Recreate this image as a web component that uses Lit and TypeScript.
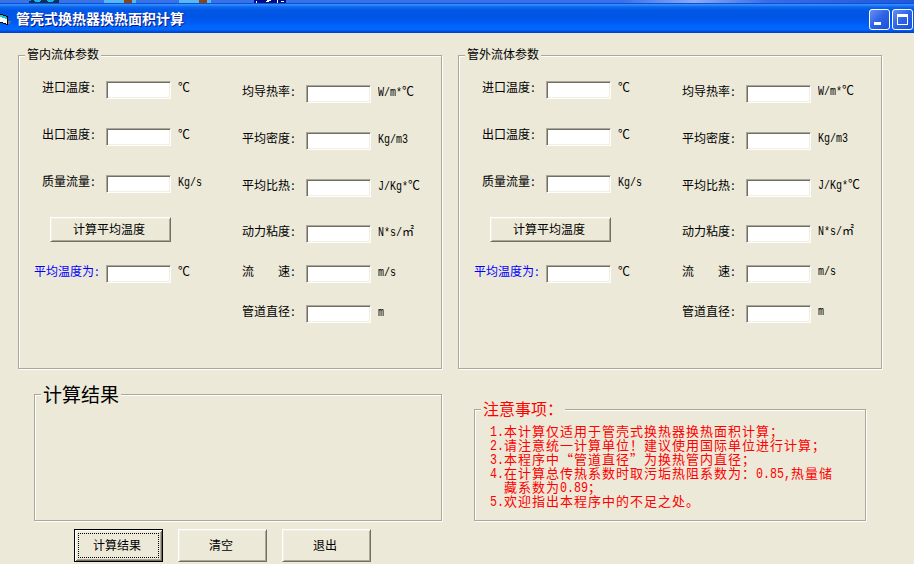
import { LitElement, html, css, svg } from 'lit';
import { customElement, property } from 'lit/decorators.js';

// Latin runs are set half as wide as a Chinese character
const mixed = (text: string) =>
    text.split(/([\x21-\x7e]+)/).filter(Boolean).map(part =>
        /^[\x21-\x7e]/.test(part) ? html`<span class="latin">${part}</span>` : part
    );

const baseText = css`
    .latin {
        display: inline-block;
        font-family: "Liberation Mono", monospace;
        font-size: 10px;
        line-height: 12px;
        letter-spacing: 0;
        transform: scaleY(1.2);
        transform-origin: 0 9px;
    }
`;

@customElement('xp-group')
export class XpGroup extends LitElement {
    @property() caption = '';

    static styles = css`
        :host {
            display: block;
            position: relative;
            box-sizing: border-box;
            border: 1px solid #aca899;
            box-shadow: 1px 1px 0 #fff, inset 1px 1px 0 #fff;
        }

        .caption {
            position: absolute;
            top: var(--caption-top, -8px);
            left: 6px;
            width: var(--caption-width, 74px);
            padding-left: var(--caption-pad, 2px);
            background: #ece9d8;
            color: var(--caption-color, #000);
            font-size: var(--caption-size, 12px);
            line-height: 1;
            white-space: nowrap;
        }
    `;

    render() {
        return html`
            <div class="caption">${this.caption}</div>
            <slot></slot>
        `;
    }
}

@customElement('xp-button')
export class XpButton extends LitElement {
    @property({ type: Boolean, reflect: true }) focused = false;

    static styles = css`
        :host {
            display: block;
        }

        .button {
            display: flex;
            align-items: center;
            justify-content: center;
            position: relative;
            box-sizing: border-box;
            width: 100%;
            height: 100%;
            padding: 0 3px 2px 0;
            border: 1px solid;
            border-color: #fff #716f64 #716f64 #fff;
            border-radius: 0;
            background: #ece9d8;
            box-shadow: inset 1px 1px 0 #f1efe2, inset -1px -1px 0 #aca899;
            color: #000;
            font: inherit;
            line-height: 12px;
        }

        :host([focused]) .button {
            border-color: #000;
            box-shadow: inset 1px 1px 0 #fff, inset -1px -1px 0 #716f64,
                inset 2px 2px 0 #f1efe2, inset -2px -2px 0 #aca899;
        }

        :host([focused]) .button::after {
            content: '';
            position: absolute;
            inset: 3px;
            border: 1px dotted #000;
        }
    `;

    render() {
        return html`<button class="button"><slot></slot></button>`;
    }
}

@customElement('param-field')
export class ParamField extends LitElement {
    @property() label = '';
    @property() unit = '';
    @property({ type: Boolean, reflect: true }) result = false;

    static styles = [
        baseText,
        css`
            :host {
                display: grid;
                grid-template-columns: 64px 65px auto;
                align-items: start;
                justify-content: start;
                height: 18px;
                line-height: 12px;
                white-space: pre;
            }

            :host([result]) {
                grid-template-columns: 72px 65px auto;
                margin-left: -8px;
                color: #00f;
            }

            .colon {
                display: inline-block;
                width: 6px;
                text-align: center;
            }

            .input {
                box-sizing: border-box;
                width: 65px;
                height: 18px;
                padding: 0;
                border: 1px solid;
                border-color: #aca899 #fff #fff #aca899;
                border-radius: 0;
                outline: none;
                background: #fff;
                box-shadow: inset 1px 1px 0 #716f64, inset -1px -1px 0 #f1efe2;
            }

            .unit {
                height: 12px;
                margin: var(--unit-top, 0px) 0 0 7px;
                color: #000;
            }
        `
    ];

    render() {
        return html`
            <div class="label">${this.label}<span class="colon">:</span></div>
            <input class="input" />
            <div class="unit">${mixed(this.unit)}</div>
        `;
    }
}

@customElement('fluid-params')
export class FluidParams extends LitElement {
    static styles = css`
        :host {
            display: flex;
        }

        .thermal {
            display: grid;
            grid-template-rows: 47px 47px 42px 48px 18px;
            align-items: start;
            width: 200px;
            padding: 25px 0 0 23px;
            box-sizing: border-box;
        }

        .material {
            display: grid;
            grid-template-rows: 47px 47px 46px 40px 40px 18px;
            align-items: start;
            padding: 29px 0 0 23px;
            --unit-top: var(--material-unit-top, 0px);
        }

        .average {
            width: 121px;
            height: 25px;
            margin-left: 8px;
        }
    `;

    render() {
        return html`
            <div class="thermal">
                <param-field label="进口温度" unit="℃"></param-field>
                <param-field label="出口温度" unit="℃"></param-field>
                <param-field label="质量流量" unit="Kg/s"></param-field>
                <xp-button class="average">计算平均温度</xp-button>
                <param-field label="平均温度为" unit="℃" result></param-field>
            </div>
            <div class="material">
                <param-field label="均导热率" unit="W/m*℃"></param-field>
                <param-field label="平均密度" unit="Kg/m3"></param-field>
                <param-field label="平均比热" unit="J/Kg*℃"></param-field>
                <param-field label="动力粘度" unit="N*s/㎡"></param-field>
                <param-field label="流　　速" unit="m/s"></param-field>
                <param-field label="管道直径" unit="m"></param-field>
            </div>
        `;
    }
}

@customElement('app-root')
export class AppRoot extends LitElement {
    notes = [
        ['1.', '本计算仅适用于管壳式换热器换热面积计算；'],
        ['2.', '请注意统一计算单位！建议使用国际单位进行计算；'],
        ['3.', '本程序中“管道直径”为换热管内直径；'],
        ['4.', '在计算总传热系数时取污垢热阻系数为：0.85,热量储'],
        ['', '藏系数为0.89；'],
        ['5.', '欢迎指出本程序中的不足之处。']
    ];

    static styles = [
        baseText,
        css`
            :host {
                display: block;
                width: 914px;
                height: 564px;
                overflow: hidden;
                background: #ece9d8;
                color: #000;
                font-family: "Noto Sans CJK SC", sans-serif;
                font-size: 12px;
                text-spacing-trim: space-all;
            }

            .desktop {
                display: block;
                width: 914px;
                height: 3px;
            }

            .titlebar {
                display: flex;
                align-items: center;
                box-sizing: border-box;
                height: 30px;
                background: linear-gradient(#0053dc 0, #0053dc 1px, #3c96ff 1px, #2b87fb 2px, #0f67ee 4px, #0058e6 7px, #0054e3 14px, #005cf5 20px, #0068ff 25px, #0066fc 27px, #0050dc 28px, #003fc6 30px);
            }

            .icon {
                width: 12px;
                height: 16px;
                margin: 2px 4px 0 0;
            }

            .title {
                flex: 1;
                margin-top: 0;
                color: #fff;
                font-size: 14px;
                font-weight: bold;
                line-height: 16px;
                text-shadow: 1px 1px 0 #0a1883;
            }

            .control {
                width: 21px;
                height: 21px;
                margin: 3px 1px 0;
            }

            .groups {
                display: grid;
                grid-template-columns: 424px 424px;
                gap: 16px;
                padding: 22px 0 0 18px;
            }

            .fluid {
                height: 314px;
            }

            .outer {
                --material-unit-top: -1px;
            }

            .bottom {
                display: grid;
                grid-template-columns: 408px 392px;
                align-items: end;
                gap: 32px;
                padding: 25px 0 0 34px;
            }

            .results {
                height: 127px;
                --caption-top: -11px;
                --caption-size: 19px;
                --caption-width: 78px;
            }

            .notes {
                height: 112px;
                --caption-top: -10px;
                --caption-size: 16px;
                --caption-width: 82px;
                --caption-color: #f00;
            }

            .lines {
                padding: 14px 0 0 15px;
                color: #f00;
                font-size: 13px;
                letter-spacing: 1px;
                line-height: 14px;
                white-space: nowrap;
            }

            .line {
                display: grid;
                grid-template-columns: 14px auto;
                justify-content: start;
                height: 14px;
            }

            .line .latin {
                font-size: 11.67px;
                line-height: 14px;
                transform-origin: 0 11px;
            }

            .actions {
                display: flex;
                gap: 15px;
                padding: 8px 0 0 74px;
            }

            .action {
                width: 89px;
                height: 33px;
            }
        `
    ];

    renderDesktop() {
        return html`
            <svg class="desktop" viewBox="0 0 914 3" shape-rendering="crispEdges">
                <defs>
                    <linearGradient id="sky">
                        <stop offset="0" stop-color="#3a72e4" />
                        <stop offset="0.68" stop-color="#3a6eea" />
                        <stop offset="0.76" stop-color="#8fa8f2" />
                        <stop offset="0.84" stop-color="#3a6be6" />
                        <stop offset="1" stop-color="#2458dc" />
                    </linearGradient>
                </defs>
                <rect width="914" height="3" fill="url(#sky)" />
                <path d="M31 0h28v3H29V1h2z" fill="#10305c" />
                <path d="M34 0h7v1h-1v1h-5v-1h-1zM47 0h7v1h-1v1h-5v-1h-1z" fill="#18b8e8" />
                ${[104, 179].map(x => svg`
                    <rect x=${x} width="32" height="3" fill="#58b8f0" />
                    <rect x=${x + 20} width="8" height="3" fill="#8c4410" />
                `)}
                <rect x="254" width="32" height="3" fill="#000c80" />
                <path d="M256 1h1v2h-1zM267 0h4v1h-2v1h-3v-1h1zM277 0h1v3h-1zM281 1h3v1h-3z" fill="#fff" />
            </svg>
        `;
    }

    renderTitlebar() {
        return html`
            <div class="titlebar">
                <svg class="icon" viewBox="0 0 12 16" shape-rendering="crispEdges">
                    <path d="M0 3h3v1h3v1h2v9H6v-1H3v-1H0z" fill="#000" />
                    <path d="M0 6h3v1h3v1h1v5H6v-1H3v-1H0z" fill="#fff" />
                    <path d="M0 4h3v1h3v1h1v2H5V7H2V6H0z" fill="#18c8c8" />
                    <path d="M8 10h3v1h-1v2H8z" fill="#777" />
                </svg>
                <div class="title">管壳式换热器换热面积计算</div>
                <svg class="control" viewBox="0 0 21 21">
                    <defs>
                        <linearGradient id="face" x2="1" y2="1">
                            <stop offset="0" stop-color="#6a92f2" />
                            <stop offset="0.5" stop-color="#2c62e4" />
                            <stop offset="1" stop-color="#1a50d8" />
                        </linearGradient>
                    </defs>
                    <rect x="0.5" y="0.5" width="20" height="20" rx="2.5" fill="url(#face)" stroke="#fff" />
                    <path d="M5 13h7v3H5z" fill="#fff" />
                </svg>
                <svg class="control" viewBox="0 0 21 21">
                    <rect x="0.5" y="0.5" width="20" height="20" rx="2.5" fill="url(#face)" stroke="#fff" />
                    <path d="M5 5h11v11H5zM6 8v7h9V8z" fill="#fff" fill-rule="evenodd" />
                </svg>
            </div>
        `;
    }

    render() {
        return html`
            ${this.renderDesktop()}
            ${this.renderTitlebar()}
            <div class="groups">
                <xp-group class="fluid" caption="管内流体参数">
                    <fluid-params></fluid-params>
                </xp-group>
                <xp-group class="fluid outer" caption="管外流体参数">
                    <fluid-params></fluid-params>
                </xp-group>
            </div>
            <div class="bottom">
                <xp-group class="results" caption="计算结果"></xp-group>
                <xp-group class="notes" caption="注意事项：">
                    <div class="lines">
                        ${this.notes.map(([number, text]) => html`
                            <div class="line"><span>${mixed(number)}</span><span>${mixed(text)}</span></div>
                        `)}
                    </div>
                </xp-group>
            </div>
            <div class="actions">
                <xp-button class="action" focused>计算结果</xp-button>
                <xp-button class="action">清空</xp-button>
                <xp-button class="action">退出</xp-button>
            </div>
        `;
    }
}
